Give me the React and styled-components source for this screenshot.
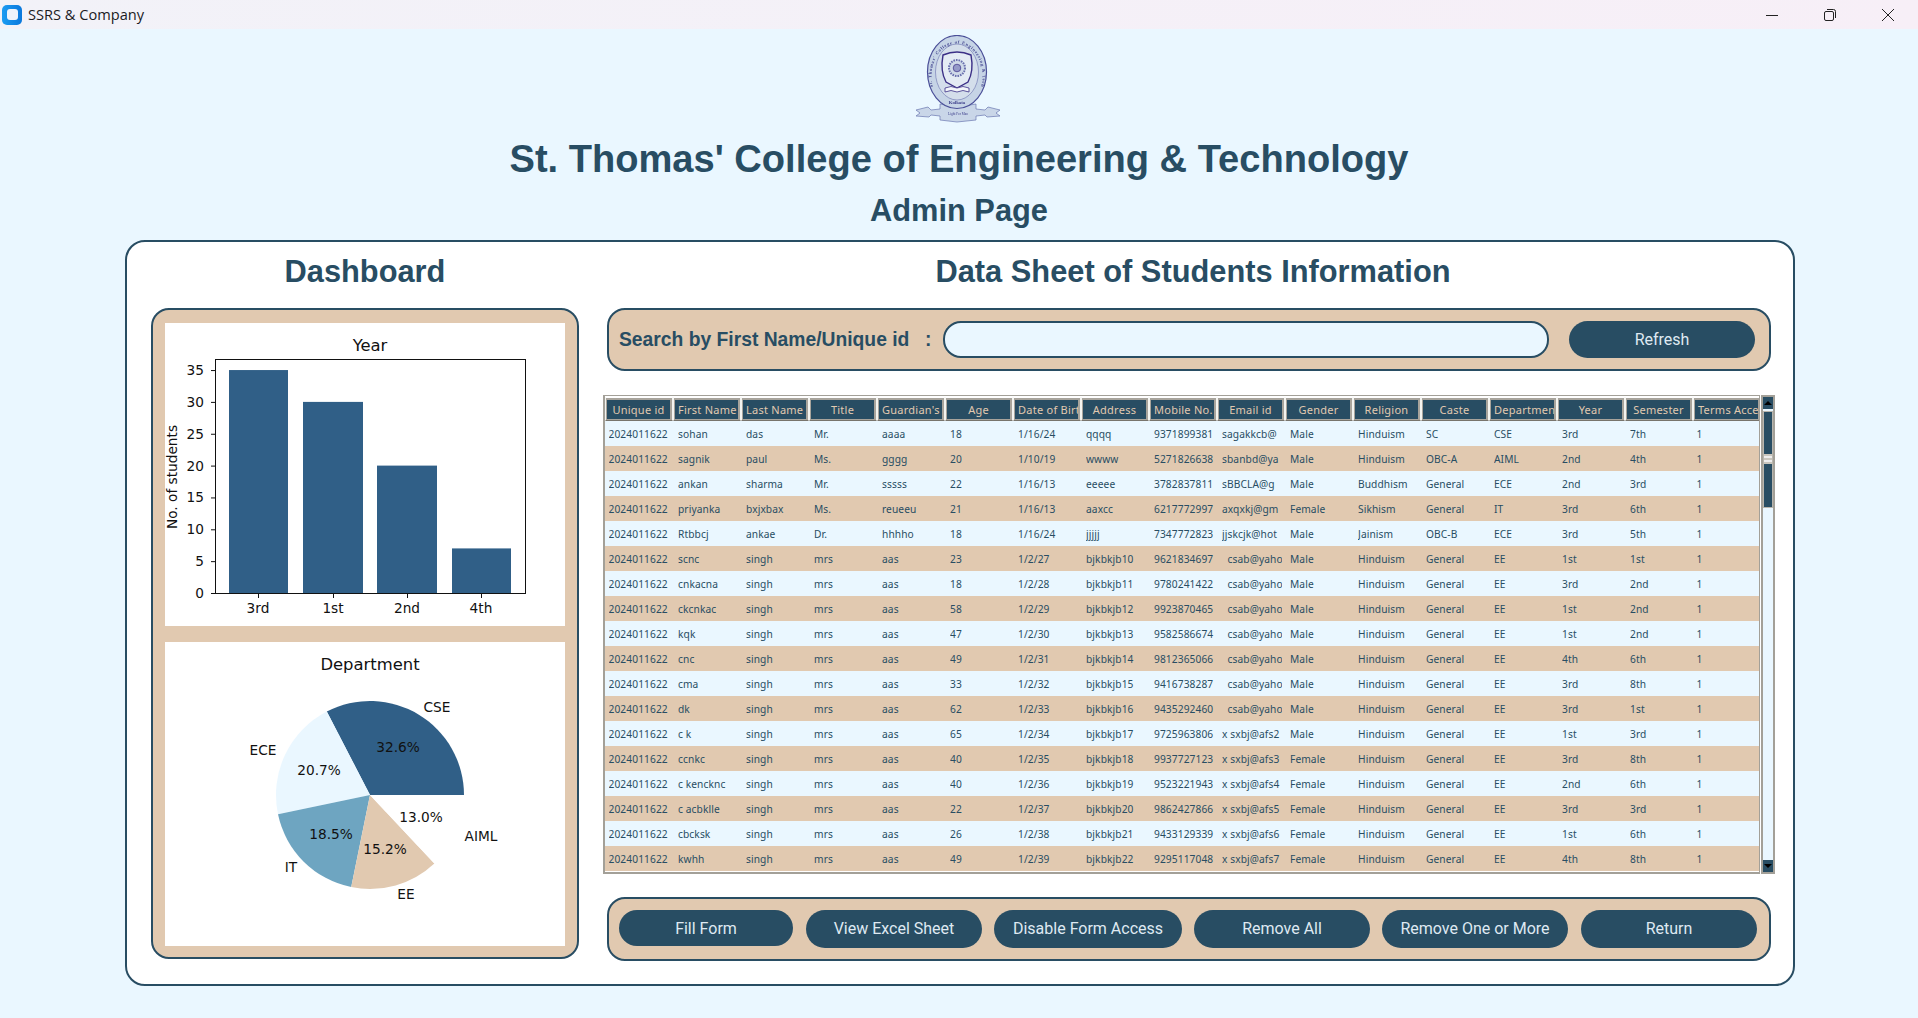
import React from 'react'
import styled, { createGlobalStyle } from 'styled-components'

const NAVY = '#284d63'
const TAN = '#e1c9b0'
const PALE = '#eaf7ff'
const BAR = '#305f87'
const STEEL = '#6ea5c1'

const GlobalStyle = createGlobalStyle`
  html, body {
    margin: 0;
    padding: 0;
    height: 100%;
    overflow: hidden;
    background: ${PALE};
  }
`

const Page = styled.div`
  width: 1918px;
  height: 1018px;
  display: flex;
  flex-direction: column;
  align-items: center;
  background: ${PALE};
  color: ${NAVY};
  font-family: 'Liberation Sans', Arial, sans-serif;
`

const TitleBar = styled.div`
  width: 100%;
  height: 29px;
  flex: none;
  display: flex;
  align-items: center;
  padding-left: 2px;
  box-sizing: border-box;
  background: linear-gradient(90deg, #f2f2f8, #f7eff7);
`

const AppIcon = styled.div`
  width: 20px;
  height: 20px;
  border-radius: 5px;
  background: linear-gradient(90deg, #1c9cf2, #0a78dc);
  display: flex;
  align-items: center;
  justify-content: center;
  &::after {
    content: '';
    width: 11px;
    height: 11px;
    border-radius: 3px;
    background: #eef3fb;
  }
`

const AppName = styled.span`
  margin-left: 6px;
  padding-bottom: 2px;
  font: 14.6px 'Open Sans', sans-serif;
  color: #1b1b1f;
`

const WindowButtons = styled.div`
  margin-left: auto;
  display: flex;
  align-items: center;
  gap: 46px;
  padding-right: 24px;
`

const Crest = styled.svg`
  width: 90px;
  height: 88px;
  flex: none;
  margin-top: 6px;
  filter: blur(0.35px);
`

const CollegeName = styled.h1`
  margin: 14px 0 0;
  font-size: 38.1px;
  line-height: 44px;
  font-weight: 700;
`

const PageName = styled.h2`
  margin: 12px 0 0;
  font-size: 30.8px;
  line-height: 36px;
  font-weight: 700;
`

const MainPanel = styled.div`
  margin: 11px 0 0 125px;
  align-self: flex-start;
  width: 1670px;
  height: 746px;
  flex: none;
  box-sizing: border-box;
  border: 2px solid ${NAVY};
  border-radius: 20px;
  background: #fff;
  padding: 13px 0 0 24px;
  display: grid;
  grid-template-columns: 428px 1164px;
  column-gap: 28px;
`

const Column = styled.div`
  display: flex;
  flex-direction: column;
`

const SectionTitle = styled.h3`
  margin: 0 0 19px;
  padding-left: ${p => p.$shift || 0}px;
  font-size: 30.8px;
  line-height: 34px;
  font-weight: 700;
  text-align: center;
`

const ChartPanel = styled.div`
  width: 428px;
  height: 651px;
  box-sizing: border-box;
  border: 2px solid ${NAVY};
  border-radius: 18px;
  background: ${TAN};
  padding: 13px 12px 11px;
  display: flex;
  flex-direction: column;
  gap: 16px;
`

const ChartSvg = styled.svg`
  display: block;
  width: 400px;
  height: ${p => p.$h}px;
  background: #fff;
  text {
    font-family: 'DejaVu Sans', sans-serif;
    fill: #111;
  }
`

const SearchBar = styled.div`
  box-sizing: border-box;
  border: 2px solid ${NAVY};
  border-radius: 18px;
  background: ${TAN};
  width: 1164px;
  height: 63px;
  display: flex;
  align-items: center;
  padding-left: 10px;
`

const ActionBar = styled(SearchBar)`
  height: 64px;
  align-items: flex-start;
  padding-top: 11px;
`

const SearchLabel = styled.span`
  font-size: 19.3px;
  font-weight: 700;
  white-space: nowrap;
  width: 306px;
  flex: none;
`

const SearchColon = styled.span`
  font-size: 19.3px;
  font-weight: 700;
  width: 18px;
  flex: none;
`

const SearchInput = styled.input`
  width: 606px;
  height: 37px;
  flex: none;
  box-sizing: border-box;
  border: 2px solid ${NAVY};
  border-radius: 18px;
  background: ${PALE};
  outline: none;
`

const PillButton = styled.button`
  flex: none;
  width: ${p => p.$w}px;
  height: ${p => p.$h || 38}px;
  margin: 0 0 0 ${p => p.$ml || 0}px;
  padding: 0 0 ${p => (p.$h ? 0 : 2)}px;
  border: 0;
  border-radius: 19px;
  background: ${NAVY};
  color: #dfe9f2;
  font: 16px Roboto, sans-serif;
`

const SheetFrame = styled.div`
  margin: 24px 0 23px -4px;
  width: 1172px;
  height: 479px;
  display: flex;
  gap: 1px;
`

const Sheet = styled.div`
  width: 1157px;
  height: 479px;
  flex: none;
  box-sizing: border-box;
  border: 1px solid #a3a098;
  border-width: 1px 1px 2px 2px;
  background: #fff;
  overflow: hidden;
`

const HeaderRow = styled.div`
  display: grid;
  grid-template-columns: repeat(17, 68px);
  height: 25px;
  box-sizing: border-box;
  padding-top: 1px;
`

const HeaderCell = styled.div`
  background: #a8a49c;
  border-left: 1px solid #f4f4f0;
  border-right: 1px solid #f4f4f0;
  border-bottom: 1px solid #77746c;
  border-top: 1px solid #fff;
  padding: 2px 2px 1px 1px;
  min-width: 0;
  display: flex;
`

const HeaderLabel = styled.div`
  flex: 1;
  min-width: 0;
  background: ${NAVY};
  color: ${TAN};
  font: 11px 'Noto Sans', sans-serif;
  letter-spacing: 0.25px;
  display: flex;
  align-items: center;
  justify-content: safe center;
  padding: 0 3px;
  overflow: hidden;
  white-space: nowrap;
`

const DataRow = styled.div`
  display: grid;
  grid-template-columns: repeat(17, 68px);
  height: 25px;
  background: ${p => (p.$tan ? TAN : PALE)};
`

const DataCell = styled.div`
  min-width: 0;
  height: 25px;
  padding: 0 3px 0 5px;
  font: 10.2px/26px 'Noto Sans', sans-serif;
  letter-spacing: 0.1px;
  color: ${NAVY};
  &:first-child,
  &:last-child {
    padding-left: 3.5px;
  }
`

const CellText = styled.span`
  display: block;
  overflow: hidden;
  white-space: pre;
`

const ScrollTrack = styled.div`
  width: 14px;
  height: 479px;
  flex: none;
  box-sizing: border-box;
  border: 2px solid #a3a098;
  background: ${PALE};
  display: flex;
  flex-direction: column;
`

const ScrollArrow = styled.div`
  height: 12px;
  flex: none;
  background: ${NAVY};
  display: flex;
  align-items: center;
  justify-content: center;
  margin-top: ${p => (p.$end ? 'auto' : '0')};
  &::after {
    content: '';
    border-left: 4px solid transparent;
    border-right: 4px solid transparent;
    ${p => (p.$end ? 'border-top' : 'border-bottom')}: 4px solid #000;
  }
`

const ScrollThumb = styled.div`
  margin-top: 2px;
  height: 97px;
  flex: none;
  box-sizing: border-box;
  border: 1px solid #b9b6ae;
  background: linear-gradient(
    ${NAVY} 0 42px,
    #c9c6be 42px 44px,
    #eee 44px 46px,
    #c9c6be 46px 48px,
    #eee 48px 50px,
    #c9c6be 50px 52px,
    ${NAVY} 52px
  );
`

const HEADERS = [
  'Unique id', 'First Name', 'Last Name', 'Title', "Guardian's Name", 'Age', 'Date of Birth',
  'Address', 'Mobile No.', 'Email id', 'Gender', 'Religion', 'Caste', 'Department', 'Year',
  'Semester', 'Terms Accepted',
]

const ROWS = [
  ['sohan', 'das', 'Mr.', 'aaaa', '18', '1/16/24', 'qqqq', '9371899381', 'sagakkcb@', 'Male', 'Hinduism', 'SC', 'CSE', '3rd', '7th'],
  ['sagnik', 'paul', 'Ms.', 'gggg', '20', '1/10/19', 'wwww', '5271826638', 'sbanbd@ya', 'Male', 'Hinduism', 'OBC-A', 'AIML', '2nd', '4th'],
  ['ankan', 'sharma', 'Mr.', 'sssss', '22', '1/16/13', 'eeeee', '3782837811', 'sBBCLA@g', 'Male', 'Buddhism', 'General', 'ECE', '2nd', '3rd'],
  ['priyanka', 'bxjxbax', 'Ms.', 'reueeu', '21', '1/16/13', 'aaxcc', '6217772997', 'axqxkj@gm', 'Female', 'Sikhism', 'General', 'IT', '3rd', '6th'],
  ['Rtbbcj', 'ankae', 'Dr.', 'hhhho', '18', '1/16/24', 'jjjjj', '7347772823', 'jjskcjk@hot', 'Male', 'Jainism', 'OBC-B', 'ECE', '3rd', '5th'],
]

// the generated test records only differ in these columns
const BULK = [
  ['scnc', '23', '10', '9621834697', '  csab@yaho', 'Male', '1st', '1st'],
  ['cnkacna', '18', '11', '9780241422', '  csab@yaho', 'Male', '3rd', '2nd'],
  ['ckcnkac', '58', '12', '9923870465', '  csab@yaho', 'Male', '1st', '2nd'],
  ['kqk', '47', '13', '9582586674', '  csab@yaho', 'Male', '1st', '2nd'],
  ['cnc', '49', '14', '9812365066', '  csab@yaho', 'Male', '4th', '6th'],
  ['cma', '33', '15', '9416738287', '  csab@yaho', 'Male', '3rd', '8th'],
  ['dk', '62', '16', '9435292460', '  csab@yaho', 'Male', '3rd', '1st'],
  ['c k', '65', '17', '9725963806', 'x sxbj@afs2', 'Male', '1st', '3rd'],
  ['ccnkc', '40', '18', '9937727123', 'x sxbj@afs3', 'Female', '3rd', '8th'],
  ['c kencknc', '40', '19', '9523221943', 'x sxbj@afs4', 'Female', '2nd', '6th'],
  ['c acbklle', '22', '20', '9862427866', 'x sxbj@afs5', 'Female', '3rd', '3rd'],
  ['cbcksk', '26', '21', '9433129339', 'x sxbj@afs6', 'Female', '1st', '6th'],
  ['kwhh', '49', '22', '9295117048', 'x sxbj@afs7', 'Female', '4th', '8th'],
]

const ALL_ROWS = [
  ...ROWS,
  ...BULK.map(([name, age, n, mobile, email, gender, year, sem], i) => [
    name, 'singh', 'mrs', 'aas', age, `1/2/${27 + i}`, `bjkbkjb${n}`, mobile, email, gender,
    'Hinduism', 'General', 'EE', year, sem,
  ]),
].map(r => ['2024011622', ...r, '1'])

const BUTTONS = [
  { label: 'Fill Form', w: 174, h: 36, ml: 0 },
  { label: 'View Excel Sheet', w: 176, ml: 13 },
  { label: 'Disable Form Access', w: 188, ml: 12 },
  { label: 'Remove All', w: 176, ml: 12 },
  { label: 'Remove One or More', w: 186, ml: 12 },
  { label: 'Return', w: 176, ml: 13 },
]

const YEARS = [
  { label: '3rd', x: 64, w: 59, value: 35 },
  { label: '1st', x: 138, w: 60, value: 30 },
  { label: '2nd', x: 212, w: 60, value: 20 },
  { label: '4th', x: 287, w: 59, value: 7 },
]

const SLICES = [
  { pct: 32.6, color: BAR },
  { pct: 20.7, color: PALE },
  { pct: 18.5, color: STEEL },
  { pct: 15.2, color: TAN },
  { pct: 13.0, color: '#fff' },
]

const PIE_LABELS = [
  ['CSE', 272, 66], ['ECE', 98, 109], ['IT', 126, 226], ['EE', 241, 253], ['AIML', 316, 195],
  ['32.6%', 233, 106], ['20.7%', 154, 129], ['18.5%', 166, 193], ['15.2%', 220, 208], ['13.0%', 256, 176],
]

const BarChart = () => {
  const baseY = 270
  const unit = 6.37
  return (
    <ChartSvg $h={303} viewBox="0 0 400 303">
      <text x="205" y="23" fontSize="16.4" textAnchor="middle" dominantBaseline="middle">Year</text>
      {YEARS.map(b => (
        <rect key={b.label} x={b.x} y={baseY - b.value * unit} width={b.w} height={b.value * unit} fill={BAR} />
      ))}
      <rect x="50.5" y="36.5" width="310" height="234" fill="none" stroke="#111" strokeWidth="1" />
      {[0, 5, 10, 15, 20, 25, 30, 35].map(t => {
        const y = baseY - t * unit
        return (
          <g key={t}>
            <line x1="46" x2="50" y1={y + 0.5} y2={y + 0.5} stroke="#111" />
            <text x="39" y={y + 1} fontSize="13.7" textAnchor="end" dominantBaseline="middle">{t}</text>
          </g>
        )
      })}
      {YEARS.map((b, i) => {
        const cx = [93, 168, 242, 316][i]
        return (
          <g key={b.label}>
            <line x1={cx + 0.5} x2={cx + 0.5} y1="271" y2="275" stroke="#111" />
            <text x={cx} y="286" fontSize="13.7" textAnchor="middle" dominantBaseline="middle">{b.label}</text>
          </g>
        )
      })}
      <text
        fontSize="13.7"
        textAnchor="middle"
        dominantBaseline="middle"
        transform="translate(8 154) rotate(-90)"
      >
        No. of students
      </text>
    </ChartSvg>
  )
}

const PieChart = () => {
  const cx = 205
  const cy = 153
  const r = 94
  let start = 0
  return (
    <ChartSvg $h={304} viewBox="0 0 400 304">
      <text x="205" y="23" fontSize="16.4" textAnchor="middle" dominantBaseline="middle">Department</text>
      {SLICES.map(s => {
        const from = start
        const to = start + (s.pct / 100) * Math.PI * 2
        start = to
        const x1 = cx + r * Math.cos(from)
        const y1 = cy - r * Math.sin(from)
        const x2 = cx + r * Math.cos(to)
        const y2 = cy - r * Math.sin(to)
        const large = to - from > Math.PI ? 1 : 0
        return (
          <path
            key={s.pct}
            d={`M${cx} ${cy}L${x1} ${y1}A${r} ${r} 0 ${large} 0 ${x2} ${y2}Z`}
            fill={s.color}
          />
        )
      })}
      {PIE_LABELS.map(([t, x, y]) => (
        <text key={t} x={x} y={y} fontSize="13.7" textAnchor="middle" dominantBaseline="middle">{t}</text>
      ))}
    </ChartSvg>
  )
}

const CollegeCrest = () => (
  <Crest viewBox="0 0 90 88">
    <defs>
      <path id="crestArc" d="M19 52A25.5 32.5 0 1 1 67 52" fill="none" />
    </defs>
    <path
      d="M2 75l12-3 3 3 9-1v-5l17 3 19-3v5l9 1 3-3 12 3-4 3 4 3-13 1-2-2-9 1v4l-19 2-17-2v-4l-9-1-2 2-13-1 4-3z"
      fill="#c9d6e8"
      stroke="#6a77b0"
      strokeWidth="0.7"
    />
    <ellipse cx="43" cy="37" rx="29.5" ry="36.5" fill="#c6d4e6" stroke="#4a4f98" strokeWidth="1.2" />
    <ellipse cx="43" cy="37" rx="21.5" ry="28" fill="#d4deeb" stroke="#6a70ae" strokeWidth="0.6" />
    <text fontSize="4.4" fill="#3d3f8c" fontFamily="Liberation Serif, serif" fontWeight="700">
      <textPath href="#crestArc" textLength="130" lengthAdjust="spacing">St. Thomas' College of Engineering &amp; Technology</textPath>
    </text>
    <path
      d="M29 20q14-6 28 0q3 16-3 27l-11 6l-11-6q-6-11-3-27z"
      fill="#e4ebf4"
      stroke="#3b2f86"
      strokeWidth="1.4"
    />
    <circle cx="43" cy="33" r="8" fill="#cfd9e8" stroke="#6a70ae" strokeWidth="2" strokeDasharray="1.6 1" />
    <circle cx="43" cy="33" r="3.8" fill="#9499c8" stroke="#3b2f86" strokeWidth="0.7" />
    <path d="M31 53q6-3 12 0q6-3 12 0v4q-6-3-12 0q-6-3-12 0z" fill="#f3f6fa" stroke="#3b2f86" strokeWidth="0.8" />
    <text x="43" y="69" fontSize="4.8" fill="#3d3f8c" textAnchor="middle" fontFamily="Liberation Serif, serif" fontWeight="700">Kolkata</text>
    <text x="44" y="80" fontSize="3.4" fill="#3d3f8c" textAnchor="middle" fontFamily="Liberation Serif, serif">Light For Man</text>
  </Crest>
)

const App = () => (
  <Page>
    <GlobalStyle />
    <TitleBar>
      <AppIcon />
      <AppName>SSRS &amp; Company</AppName>
      <WindowButtons>
        <svg width="12" height="12" viewBox="0 0 12 12">
          <path d="M0 6.5h12" stroke="#222" strokeWidth="1" />
        </svg>
        <svg width="12" height="12" viewBox="0 0 12 12" fill="none" stroke="#222" strokeWidth="1">
          <rect x="0.5" y="2.5" width="9" height="9" rx="1.5" />
          <path d="M3 .5h6.5a2 2 0 0 1 2 2V9" />
        </svg>
        <svg width="12" height="12" viewBox="0 0 12 12" stroke="#222" strokeWidth="1">
          <path d="M0 0l12 12M12 0L0 12" />
        </svg>
      </WindowButtons>
    </TitleBar>

    <CollegeCrest />
    <CollegeName>St. Thomas' College of Engineering &amp; Technology</CollegeName>
    <PageName>Admin Page</PageName>

    <MainPanel>
      <Column>
        <SectionTitle>Dashboard</SectionTitle>
        <ChartPanel>
          <BarChart />
          <PieChart />
        </ChartPanel>
      </Column>

      <Column>
        <SectionTitle $shift={8}>Data Sheet of Students Information</SectionTitle>
        <SearchBar>
          <SearchLabel>Search by First Name/Unique id</SearchLabel>
          <SearchColon>:</SearchColon>
          <SearchInput />
          <PillButton $w={186} $h={37} $ml={20}>Refresh</PillButton>
        </SearchBar>

        <SheetFrame>
          <Sheet>
            <HeaderRow>
              {HEADERS.map(h => (
                <HeaderCell key={h}>
                  <HeaderLabel>{h}</HeaderLabel>
                </HeaderCell>
              ))}
            </HeaderRow>
            {ALL_ROWS.map((row, i) => (
              <DataRow key={i} $tan={i % 2 === 1}>
                {row.map((value, j) => (
                  <DataCell key={j}>
                    <CellText>{value}</CellText>
                  </DataCell>
                ))}
              </DataRow>
            ))}
          </Sheet>
          <ScrollTrack>
            <ScrollArrow />
            <ScrollThumb />
            <ScrollArrow $end />
          </ScrollTrack>
        </SheetFrame>

        <ActionBar>
          {BUTTONS.map(b => (
            <PillButton key={b.label} $w={b.w} $h={b.h} $ml={b.ml}>{b.label}</PillButton>
          ))}
        </ActionBar>
      </Column>
    </MainPanel>
  </Page>
)

export default App
